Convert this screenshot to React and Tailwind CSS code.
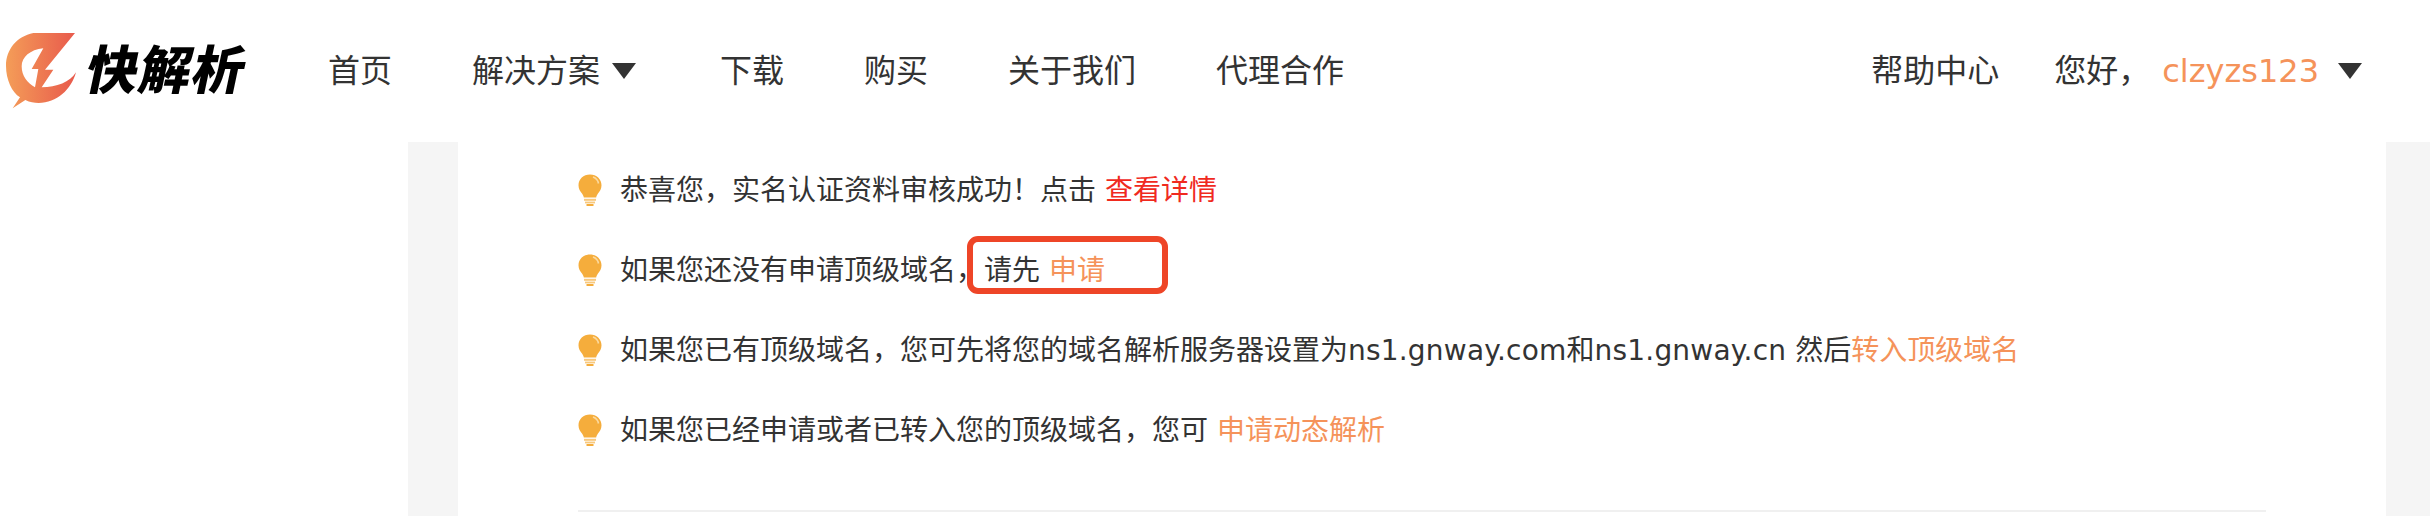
import React from "react";

const font = { fontFamily: '"DejaVu Sans", "Noto Sans CJK SC", sans-serif' };

const Caret = () => (
  <svg width="24" height="16" viewBox="0 0 24 16" className="shrink-0">
    <polygon points="0,0 24,0 12,16" fill="#333333" />
  </svg>
);

const Logo = () => (
  <div className="flex items-center w-[246px] shrink-0">
    <svg width="84" height="84" viewBox="0 0 252 252" className="shrink-0">
      <defs>
        <linearGradient id="logoFill" x1="0" y1="0" x2="1" y2="0">
          <stop offset="0" stopColor="#F49D58" />
          <stop offset="1" stopColor="#E8594C" />
        </linearGradient>
      </defs>
      <path
        d="M225 12 L100 12 C50 22 18 62 18 110 C18 152 36 190 60 205 L38 238 L76 213 C90 220 102 222 116 222 C170 222 214 182 228 130 C210 160 170 174 125 175 L160 122 L135 122 Z"
        fill="url(#logoFill)"
      />
      <path
        d="M130 58 C90 62 65 85 65 112 C65 140 82 163 105 175 L115 120 L95 120 Z"
        fill="#ffffff"
      />
    </svg>
    <span className="ml-[3px] inline-block -skew-x-12 text-[52px] leading-none font-black text-black whitespace-nowrap tracking-[1px]">
      快解析
    </span>
  </div>
);

const Bulb = () => (
  <svg width="24" height="32" viewBox="0 0 24 32" className="shrink-0">
    <path
      d="M12 0.5 C5.4 0.5 0.5 5.2 0.5 11.2 C0.5 15 2.2 17 4 19.6 C5.2 21.3 5.6 22.5 5.8 23.5 L18.2 23.5 C18.4 22.5 18.8 21.3 20 19.6 C21.8 17 23.5 15 23.5 11.2 C23.5 5.2 18.6 0.5 12 0.5 Z"
      fill="#F5AD3C"
    />
    <path d="M15 3 C18 4 20 6.5 20.5 9.5" fill="none" stroke="#FBD9A0" strokeWidth="1.6" />
    <rect x="6" y="24.8" width="12" height="2" fill="#F8C87C" />
    <rect x="7" y="27.6" width="10" height="1.8" fill="#F8C87C" />
    <rect x="8.5" y="30" width="7" height="2" fill="#F5AD3C" />
  </svg>
);

const Row = ({ children }) => (
  <div className="h-[80px] flex items-center gap-[18px]">
    <Bulb />
    <p className="pt-[1px] text-[28px] leading-none text-[#333333] whitespace-pre">{children}</p>
  </div>
);

const Orange = ({ children }) => <span className="text-[#F5935A]">{children}</span>;

export default function App() {
  return (
    <div className="w-[2430px] h-[516px] overflow-hidden bg-white" style={font}>
      <header className="h-[142px] flex items-center justify-between pr-[68px] text-[32px] leading-none text-[#333333] whitespace-nowrap">
        <div className="flex items-center">
          <Logo />
          <nav className="ml-[82px] flex items-center gap-[80px]">
            <span>首页</span>
            <span className="flex items-center gap-[12px] mr-[4px]">解决方案 <Caret /></span>
            <span>下载</span>
            <span>购买</span>
            <span>关于我们</span>
            <span>代理合作</span>
          </nav>
        </div>
        <div className="flex items-center">
          <span>帮助中心</span>
          <span className="ml-[55px]">您好，</span>
          <span className="ml-[12px] text-[#F5935A]">clzyzs123</span>
          <span className="ml-[19px]"><Caret /></span>
        </div>
      </header>

      <div className="h-[374px] bg-[#F5F5F5] ml-[408px] pl-[50px] pr-[44px]">
        <main className="h-full bg-white px-[120px] pt-[8px]">
          <Row>恭喜您，实名认证资料审核成功！点击 <span className="text-[#F02A1E]">查看详情</span></Row>
          <Row>
            如果您还没有申请顶级域名，
            <span className="relative">
              请先 <Orange>申请</Orange>
              <span className="absolute -left-[17px] -top-[18px] w-[201px] h-[58px] rounded-[11px] border-[6px] border-[#EE4527]" />
            </span>
          </Row>
          <Row>如果您已有顶级域名，您可先将您的域名解析服务器设置为<span className="tracking-[0.2px]">ns1.gnway.com</span>和<span className="tracking-[0.2px]">ns1.gnway.cn </span>然后<Orange>转入顶级域名</Orange></Row>
          <Row>如果您已经申请或者已转入您的顶级域名，您可 <Orange>申请动态解析</Orange></Row>
          <div className="mt-[40px] h-[2px] bg-[#F0F0F0]" />
        </main>
      </div>
    </div>
  );
}
